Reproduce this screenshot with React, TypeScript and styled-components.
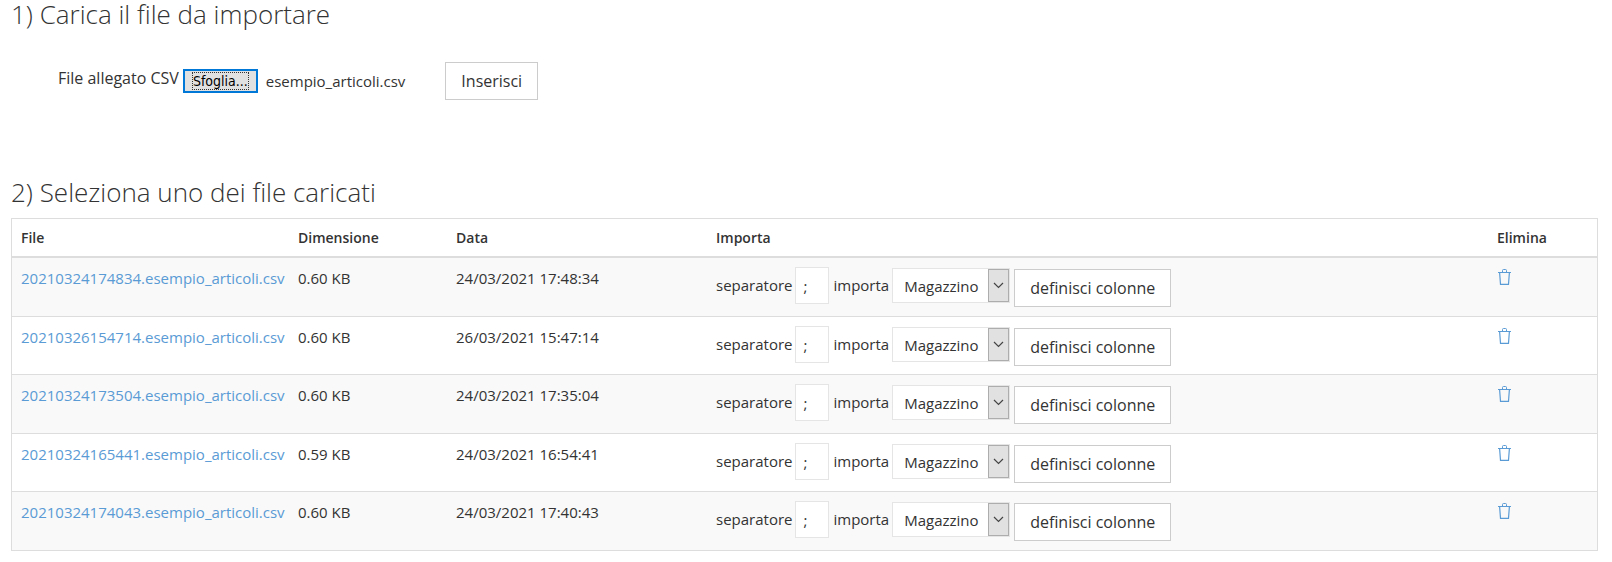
import React, { useRef, useState } from "react";
import styled, { createGlobalStyle } from "styled-components";

const GlobalStyle = createGlobalStyle`
  * { box-sizing: border-box; }
  body {
    margin: 0;
    background: #fff;
    color: #333;
    font-family: "Open Sans", "Noto Sans", sans-serif;
    font-size: 15px;
    line-height: 20px;
  }
  button, input, select { font: inherit; color: inherit; }
`;

const Page = styled.main`
  padding: 0 14px 10px 11px;
`;

const Title = styled.h2`
  margin: 0;
  font-size: 26px;
  line-height: 28px;
  font-weight: 300;
`;

const UploadForm = styled.form`
  display: flex;
  align-items: center;
  padding: 34px 0 78px 47px;
`;

const UploadLabel = styled.label`
  padding-bottom: 6px;
  margin-right: 4px;
  font-size: 16px;
`;

const HiddenFile = styled.input`
  display: none;
`;

const BrowseButton = styled.button`
  height: 24px;
  padding: 1px 7px;
  border: 2px solid #0078d7;
  border-radius: 0;
  background: #e1e1e1;
  color: #000;
  font-family: "DejaVu Sans Condensed", "DejaVu Sans", sans-serif;
  font-size: 14px;
  line-height: 16px;
`;

const FocusRing = styled.span`
  display: block;
  border: 1px dotted #333;
`;

const FileName = styled.output`
  margin: 0 40px 0 8px;
`;

const ActionButton = styled.button`
  height: 38px;
  padding: 0 15px;
  border: 1px solid #ccc;
  border-radius: 0;
  background: #fff;
  font-size: 16px;
  line-height: 22px;
`;

const FileTable = styled.table`
  width: 100%;
  margin-top: 12px;
  table-layout: fixed;
  border: 1px solid #ddd;
  border-spacing: 0;
`;

const Column = styled.col<{ $width?: number }>`
  width: ${({ $width }) => ($width ? `${$width}px` : "auto")};
`;

const HeadCell = styled.th`
  height: 39px;
  padding: 0 9px;
  border-bottom: 2px solid #ddd;
  font-size: 14px;
  font-weight: 600;
  text-align: left;
`;

const Row = styled.tr`
  height: 58px;
  &:nth-child(odd) {
    height: 59px;
    background: #f9f9f9;
  }
  &:last-child { height: 58px; }
  &:not(:last-child) > td { border-bottom: 1px solid #ddd; }
`;

const Cell = styled.td`
  padding: 10px 9px 0;
  vertical-align: top;
  white-space: nowrap;
`;

const FileLink = styled.a`
  color: #5a9bd5;
  text-decoration: none;
`;

const ImportForm = styled.form`
  display: flex;
  align-items: flex-start;
`;

const ImportLabel = styled.label`
  line-height: 37px;
`;

const SeparatorInput = styled.input`
  width: 34px;
  height: 37px;
  margin: 0 4px 0 3px;
  padding: 0 7px;
  border: 1px solid #e5e5e5;
  border-radius: 0;
  background: #fff;
`;

const SelectBox = styled.span`
  position: relative;
  display: block;
  width: 118px;
  margin: 1px 4px 0 3px;
`;

const Select = styled.select`
  display: block;
  width: 100%;
  height: 35px;
  padding: 0 22px 0 11px;
  border: 1px solid #e5e5e5;
  border-radius: 0;
  background: #fff;
  appearance: none;
`;

const SelectArrow = styled.span`
  position: absolute;
  top: 1px;
  right: 1px;
  bottom: 1px;
  width: 21px;
  display: flex;
  align-items: center;
  justify-content: center;
  border: 1px solid #adadad;
  background: #e1e1e1;
  pointer-events: none;
`;

const ColumnsButton = styled(ActionButton)`
  margin-top: 2px;
`;

const DeleteButton = styled.button`
  display: block;
  padding: 0;
  border: 0;
  background: none;
  color: #5a9bd5;
  svg { display: block; }
`;

const files = [
  { name: "20210324174834.esempio_articoli.csv", size: "0.60 KB", date: "24/03/2021 17:48:34" },
  { name: "20210326154714.esempio_articoli.csv", size: "0.60 KB", date: "26/03/2021 15:47:14" },
  { name: "20210324173504.esempio_articoli.csv", size: "0.60 KB", date: "24/03/2021 17:35:04" },
  { name: "20210324165441.esempio_articoli.csv", size: "0.59 KB", date: "24/03/2021 16:54:41" },
  { name: "20210324174043.esempio_articoli.csv", size: "0.60 KB", date: "24/03/2021 17:40:43" },
];

function TrashIcon() {
  return (
    <svg width="16" height="18" viewBox="0 0 16 18" fill="none" stroke="currentColor" aria-hidden="true">
      <path d="M1 4.5 H14" />
      <path d="M5.5 4.5 V2.5 Q5.5 1.5 6.5 1.5 H8.5 Q9.5 1.5 9.5 2.5 V4.5" />
      <path strokeWidth="1.2" d="M2.6 4.5 L3.5 16.4 H11.5 L12.4 4.5" />
    </svg>
  );
}

function ImportControls({ id }: { id: string }) {
  return (
    <ImportForm onSubmit={(e) => e.preventDefault()}>
      <ImportLabel htmlFor={`sep-${id}`}>separatore</ImportLabel>
      <SeparatorInput id={`sep-${id}`} type="text" defaultValue=";" />
      <ImportLabel htmlFor={`type-${id}`}>importa</ImportLabel>
      <SelectBox>
        <Select id={`type-${id}`} defaultValue="magazzino">
          <option value="magazzino">Magazzino</option>
        </Select>
        <SelectArrow>
          <svg width="11" height="7" viewBox="0 0 11 7" fill="none" stroke="#444" strokeWidth="1.2" aria-hidden="true">
            <path d="M1 1 L5.5 5.5 L10 1" />
          </svg>
        </SelectArrow>
      </SelectBox>
      <ColumnsButton type="submit">definisci colonne</ColumnsButton>
    </ImportForm>
  );
}

const ImportCell = styled(Cell)`
  padding-top: 9px;
`;

export default function App() {
  const fileRef = useRef<HTMLInputElement>(null);
  const [fileName, setFileName] = useState("esempio_articoli.csv");

  return (
    <>
      <GlobalStyle />
      <Page>
        <Title>1) Carica il file da importare</Title>
        <UploadForm onSubmit={(e) => e.preventDefault()}>
          <UploadLabel htmlFor="csv">File allegato CSV</UploadLabel>
          <HiddenFile
            id="csv"
            ref={fileRef}
            type="file"
            accept=".csv"
            onChange={(e) => setFileName(e.target.files?.[0]?.name ?? fileName)}
          />
          <BrowseButton type="button" onClick={() => fileRef.current?.click()}>
            <FocusRing>Sfoglia...</FocusRing>
          </BrowseButton>
          <FileName htmlFor="csv">{fileName}</FileName>
          <ActionButton type="submit">Inserisci</ActionButton>
        </UploadForm>

        <Title>2) Seleziona uno dei file caricati</Title>
        <FileTable>
          <colgroup>
            <Column $width={277} />
            <Column $width={158} />
            <Column $width={260} />
            <Column />
            <Column $width={109} />
          </colgroup>
          <thead>
            <tr>
              <HeadCell scope="col">File</HeadCell>
              <HeadCell scope="col">Dimensione</HeadCell>
              <HeadCell scope="col">Data</HeadCell>
              <HeadCell scope="col">Importa</HeadCell>
              <HeadCell scope="col">Elimina</HeadCell>
            </tr>
          </thead>
          <tbody>
            {files.map((file) => (
              <Row key={file.name}>
                <Cell><FileLink href={`#${file.name}`}>{file.name}</FileLink></Cell>
                <Cell>{file.size}</Cell>
                <Cell>{file.date}</Cell>
                <ImportCell><ImportControls id={file.name} /></ImportCell>
                <Cell>
                  <DeleteButton type="button" aria-label={`Elimina ${file.name}`}>
                    <TrashIcon />
                  </DeleteButton>
                </Cell>
              </Row>
            ))}
          </tbody>
        </FileTable>
      </Page>
    </>
  );
}
